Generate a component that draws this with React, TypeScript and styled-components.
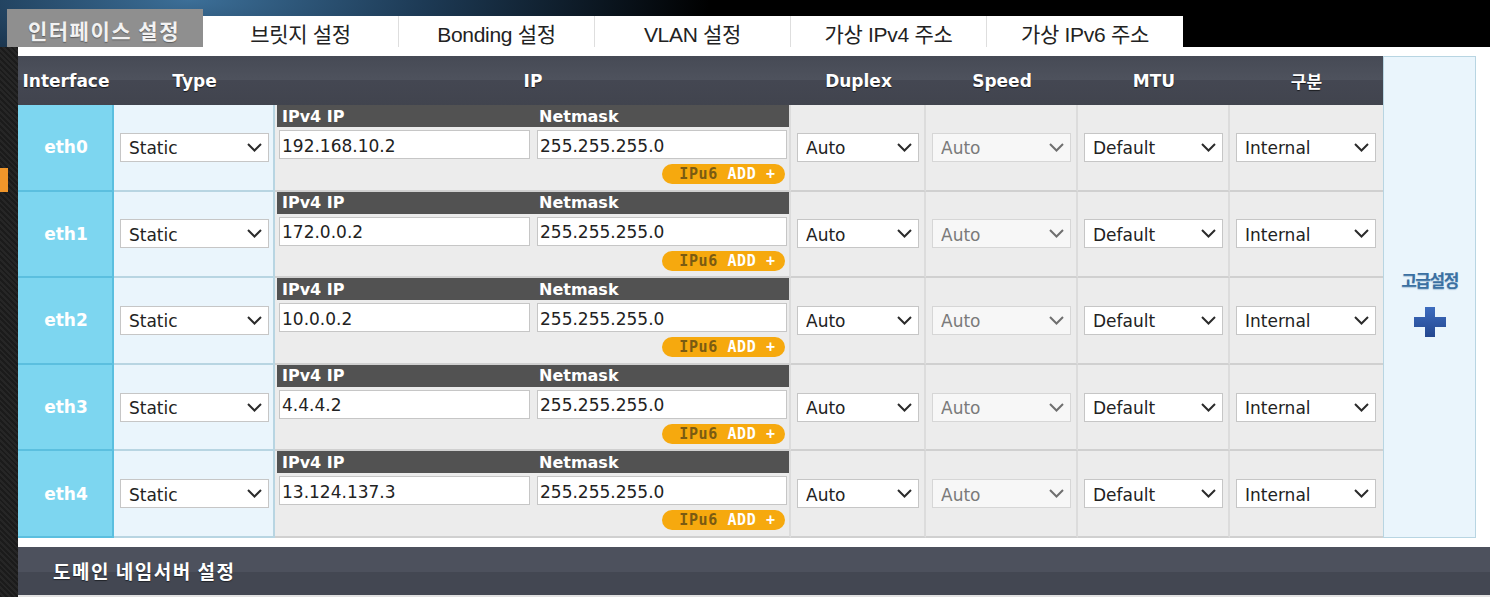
import React from "react";
import styled, { createGlobalStyle } from "styled-components";

const GlobalStyle = createGlobalStyle`
  html, body {
    margin: 0;
    padding: 0;
    background: #000;
  }
  * { box-sizing: border-box; }
`;

const FONT = `"DejaVu Sans", "Noto Sans CJK KR", sans-serif`;
const COLS = "96px 161px 516px 135px 152px 152px 153px";

const rows = [
  { name: "eth0", ip: "192.168.10.2" },
  { name: "eth1", ip: "172.0.0.2" },
  { name: "eth2", ip: "10.0.0.2" },
  { name: "eth3", ip: "4.4.4.2" },
  { name: "eth4", ip: "13.124.137.3" },
];

const tabs = ["브릿지 설정", "Bonding 설정", "VLAN 설정", "가상 IPv4 주소", "가상 IPv6 주소"];

const Chevron = ({ muted }: { muted?: boolean }) => (
  <svg width="15" height="9" viewBox="0 0 15 9">
    <polyline
      points="1,1 7.5,7.5 14,1"
      fill="none"
      stroke={muted ? "#6f6f6f" : "#2b2b2b"}
      strokeWidth="2"
    />
  </svg>
);

const PlusIcon = () => (
  <svg width="34" height="32" viewBox="0 0 34 32">
    <defs>
      <linearGradient id="pg" x1="0" y1="0" x2="0" y2="1">
        <stop offset="0" stopColor="#3d6cbf" />
        <stop offset="1" stopColor="#24478f" />
      </linearGradient>
    </defs>
    <path
      d="M12 1 H22 V11 H33 V21 H22 V31 H12 V21 H1 V11 H12 Z"
      fill="url(#pg)"
    />
  </svg>
);

const Select = ({ value, width, disabled }: { value: string; width: number; disabled?: boolean }) => (
  <SelectWrap $w={width}>
    <SelectBox defaultValue={value} disabled={disabled}>
      <option>{value}</option>
    </SelectBox>
    <ChevronSlot>
      <Chevron muted={disabled} />
    </ChevronSlot>
  </SelectWrap>
);

export default function App() {
  return (
    <>
      <GlobalStyle />
      <Page>
        <TabBar>
          <ActiveTab>인터페이스 설정</ActiveTab>
          {tabs.map((t, i) => (
            <Tab key={t} $last={i === tabs.length - 1}>{t}</Tab>
          ))}
        </TabBar>
        <Lower>
          <Side>
            <SideMark />
          </Side>
          <Content>
            <TableRow>
              <Table>
                <HeaderRow>
                  <HeadCell>Interface</HeadCell>
                  <HeadCell>Type</HeadCell>
                  <HeadCell>IP</HeadCell>
                  <HeadCell>Duplex</HeadCell>
                  <HeadCell>Speed</HeadCell>
                  <HeadCell>MTU</HeadCell>
                  <HeadCell>구분</HeadCell>
                </HeaderRow>
                {rows.map((r) => (
                  <BodyRow key={r.name}>
                    <IfaceCell>{r.name}</IfaceCell>
                    <TypeCell>
                      <Select value="Static" width={149} />
                    </TypeCell>
                    <IpCell>
                      <IpHead>
                        <span>IPv4 IP</span>
                        <span>Netmask</span>
                      </IpHead>
                      <IpInputs>
                        <TextInput defaultValue={r.ip} />
                        <TextInput defaultValue="255.255.255.0" />
                      </IpInputs>
                      <AddRow>
                        <AddButton>
                          <AddDark>IPu6</AddDark>&nbsp;ADD&nbsp;+
                        </AddButton>
                      </AddRow>
                    </IpCell>
                    <GrayCell>
                      <Select value="Auto" width={122} />
                    </GrayCell>
                    <GrayCell>
                      <Select value="Auto" width={139} disabled />
                    </GrayCell>
                    <GrayCell>
                      <Select value="Default" width={139} />
                    </GrayCell>
                    <GrayCell $noRight>
                      <Select value="Internal" width={140} />
                    </GrayCell>
                  </BodyRow>
                ))}
              </Table>
              <AdvPanel>
                <AdvLabel>고급설정</AdvLabel>
                <PlusIcon />
              </AdvPanel>
            </TableRow>
            <SectionHeader>도메인 네임서버 설정</SectionHeader>
          </Content>
        </Lower>
      </Page>
    </>
  );
}

const Page = styled.div`
  width: 1490px;
  height: 597px;
  overflow: hidden;
  display: flex;
  flex-direction: column;
  background:
    radial-gradient(ellipse 520px 140px at 190px 0px, #3c6f98 0%, #1d3a55 45%, rgba(0, 0, 0, 0) 100%),
    #000;
`;

const TabBar = styled.div`
  display: flex;
  align-items: flex-end;
  height: 47px;
  padding-left: 7px;
  flex-shrink: 0;
`;

const ActiveTab = styled.div`
  width: 196px;
  height: 38px;
  background: #8f8f8f;
  color: #f2f2f2;
  font-family: "Noto Sans CJK KR", sans-serif;
  font-weight: 700;
  font-size: 21px;
  letter-spacing: 1.5px;
  text-shadow: 0 1px 1px rgba(0, 0, 0, 0.35);
  display: flex;
  align-items: center;
  justify-content: center;
  padding: 3px 2px 0 0;
`;

const Tab = styled.div<{ $last?: boolean }>`
  width: 196px;
  height: 31px;
  background: #fff;
  color: #222;
  font-family: "Liberation Sans", "Noto Sans CJK KR", sans-serif;
  font-size: 21px;
  letter-spacing: -0.3px;
  display: flex;
  align-items: center;
  justify-content: center;
  padding-top: 2px;
  border-right: ${(p) => (p.$last ? "none" : "1px solid #dedede")};
`;

const Lower = styled.div`
  flex: 1;
  display: flex;
`;

const Side = styled.div`
  width: 18px;
  flex-shrink: 0;
  background:
    repeating-linear-gradient(45deg, #1b1b1b 0 2px, #262626 2px 4px);
  padding-top: 121px;
`;

const SideMark = styled.div`
  width: 8px;
  height: 24px;
  background: #f0962a;
`;

const Content = styled.div`
  flex: 1;
  background: #fff;
  padding-top: 9px;
  display: flex;
  flex-direction: column;
`;

const TableRow = styled.div`
  display: flex;
`;

const Table = styled.div`
  width: 1365px;
  display: flex;
  flex-direction: column;
`;

const HeaderRow = styled.div`
  display: grid;
  grid-template-columns: ${COLS};
  height: 49px;
  background: linear-gradient(#464a55 0%, #4e525d 48%, #444752 50%, #41444e 100%);
`;

const HeadCell = styled.div`
  display: flex;
  align-items: center;
  justify-content: center;
  color: #fff;
  font-family: ${FONT};
  font-weight: bold;
  font-size: 17px;
  text-shadow: 0 1px 1px rgba(0, 0, 0, 0.7);
`;

const BodyRow = styled.div`
  display: grid;
  grid-template-columns: ${COLS};
  height: 86.6px;
`;

const IfaceCell = styled.div`
  background: #7dd6f0;
  border-right: 2px solid #5bbfdf;
  border-bottom: 2px solid #5bbfdf;
  color: #fff;
  font-family: ${FONT};
  font-weight: bold;
  font-size: 17px;
  display: flex;
  align-items: center;
  justify-content: center;
  padding-left: 2px;
`;

const TypeCell = styled.div`
  background: #eaf5fc;
  border-right: 2px solid #b8d5e2;
  border-bottom: 2px solid #b8d5e2;
  display: flex;
  align-items: center;
  padding-left: 6px;
`;

const IpCell = styled.div`
  background: #ececec;
  border-right: 2px solid #dcdcdc;
  border-bottom: 2px solid #d0d0d0;
  display: flex;
  flex-direction: column;
`;

const IpHead = styled.div`
  margin-left: 2px;
  height: 22px;
  background: #525252;
  display: grid;
  grid-template-columns: 257px 1fr;
  align-items: center;
  padding-left: 5px;
  color: #fff;
  font-family: ${FONT};
  font-weight: bold;
  font-size: 16px;
`;

const IpInputs = styled.div`
  display: grid;
  grid-template-columns: 251px 250px;
  column-gap: 7px;
  padding: 3px 0 0 4px;
`;

const TextInput = styled.input`
  height: 29px;
  border: 1px solid #c6c6c6;
  background: #fff;
  font-family: ${FONT};
  font-size: 17px;
  color: #222;
  padding: 2px 0 0 2px;
  outline: none;
`;

const AddRow = styled.div`
  display: flex;
  justify-content: flex-end;
  padding: 5px 4px 0 0;
`;

const AddButton = styled.div`
  width: 123px;
  height: 20px;
  border-radius: 10px;
  background: #f6a90e;
  color: #fff;
  font-family: "DejaVu Sans Mono", monospace;
  font-weight: bold;
  font-size: 15px;
  letter-spacing: 0.6px;
  display: flex;
  align-items: center;
  justify-content: center;
  padding-left: 8px;
`;

const AddDark = styled.span`
  color: #7a5b12;
`;

const GrayCell = styled.div<{ $noRight?: boolean }>`
  background: #ececec;
  border-right: ${(p) => (p.$noRight ? "none" : "2px solid #dcdcdc")};
  border-bottom: 2px solid #d0d0d0;
  display: flex;
  align-items: center;
  padding-left: 6px;
`;

const SelectWrap = styled.div<{ $w: number }>`
  position: relative;
  width: ${(p) => p.$w}px;
  height: 29px;
`;

const SelectBox = styled.select`
  appearance: none;
  width: 100%;
  height: 100%;
  border: 1px solid #c6c6c6;
  background: #fff;
  font-family: ${FONT};
  font-size: 17px;
  color: #222;
  padding: 2px 0 0 8px;
  outline: none;

  &:disabled {
    background: #f7f7f7;
    border-color: #d6d6d6;
    color: #7a7a7a;
    opacity: 1;
  }
`;

const ChevronSlot = styled.span`
  position: absolute;
  right: 7px;
  top: 10px;
  display: flex;
  pointer-events: none;
`;

const AdvPanel = styled.div`
  width: 93px;
  background: #eaf5fc;
  border: 1px solid #b8d5e2;
  display: flex;
  flex-direction: column;
  align-items: center;
  justify-content: center;
  gap: 14px;
  padding-top: 12px;
`;

const AdvLabel = styled.div`
  font-family: "Noto Sans CJK KR", sans-serif;
  font-weight: bold;
  font-size: 17px;
  letter-spacing: -1.5px;
  color: #3b70a2;
  text-shadow: 0 1px 1px rgba(59, 112, 162, 0.35);
`;

const SectionHeader = styled.div`
  margin-top: 9px;
  height: 50px;
  background: linear-gradient(#4d515d 0%, #4d515d 50%, #434752 50%, #434752 96%, #e2e2e2 96%);
  color: #fff;
  font-family: "Noto Sans CJK KR", sans-serif;
  font-weight: bold;
  font-size: 19px;
  letter-spacing: 1.5px;
  display: flex;
  align-items: center;
  padding: 0 0 2px 35px;
  text-shadow: 0 1px 1px rgba(0, 0, 0, 0.5);
`;
